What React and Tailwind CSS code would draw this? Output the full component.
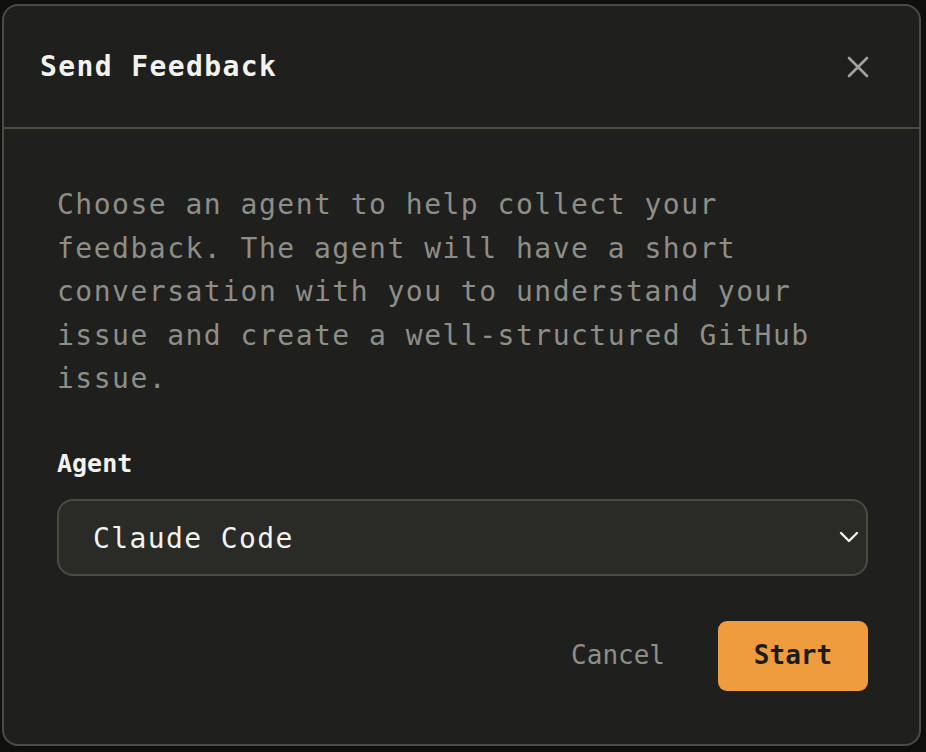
import React, { useState } from 'react';

const mono = "font-['DejaVu_Sans_Mono','Liberation_Mono',monospace]";

export default function App() {
  const [agent, setAgent] = useState('claude');

  return (
    <div className={`w-[926px] h-[752px] bg-[#0f0f0e] overflow-hidden ${mono}`}>
      <div className="ml-[2px] mt-[4px] w-[919px] h-[742px] bg-[#1f1f1d] border-2 border-[#4c4b41] rounded-[16px] flex flex-col">
        {/* Header */}
        <div className="h-[123px] shrink-0 flex items-center justify-between pl-[36px] pr-[50px] border-b-2 border-[#4c4b41]">
          <h2 className="text-[28px] leading-none font-bold tracking-[1.4px] text-[#f2f2ee]">Send Feedback</h2>
          <button className="text-[#a3a39d]" aria-label="Close">
            <svg width="22" height="22" viewBox="0 0 22 22" fill="none" stroke="currentColor" strokeWidth="2.6" strokeLinecap="round">
              <path d="M2 2l18 18M20 2L2 20" />
            </svg>
          </button>
        </div>

        {/* Body */}
        <div className="flex-1 flex flex-col pl-[53px] pr-[51px] pt-[54px]">
          <p className="text-[28px] leading-[43.6px] tracking-[1.5px] text-[#8e8e89]">
            Choose an agent to help collect your feedback. The agent will have a short conversation with you to understand your issue and create a well-structured GitHub issue.
          </p>

          <label className="mt-[47px] text-[25px] leading-[32px] font-bold text-[#f2f2ee]">Agent</label>

          <div className="relative mt-[19px]">
            <select
              value={agent}
              onChange={(e) => setAgent(e.target.value)}
              className="appearance-none w-full h-[77px] rounded-[16px] bg-[#2a2a26] border-2 border-[#4c4b41] pl-[34px] pt-[4px] text-[28px] tracking-[1.4px] text-[#f2f2ee] outline-none"
            >
              <option value="claude">Claude Code</option>
            </select>
            <svg className="absolute right-[9px] top-1/2 -translate-y-1/2 pointer-events-none text-[#f2f2ee]" width="20" height="12" viewBox="0 0 20 12" fill="none" stroke="currentColor" strokeWidth="2.4" strokeLinecap="round" strokeLinejoin="round">
              <path d="M2 2l8 8 8-8" />
            </svg>
          </div>

          {/* Actions */}
          <div className="mt-[45px] flex justify-end items-center gap-[53px]">
            <button className="text-[26px] text-[#8e8e89]">Cancel</button>
            <button className="w-[150px] h-[70px] rounded-[9px] bg-[#ef9c3f] text-[26px] font-bold text-[#1c1c1a]">Start</button>
          </div>
        </div>
      </div>
    </div>
  );
}
